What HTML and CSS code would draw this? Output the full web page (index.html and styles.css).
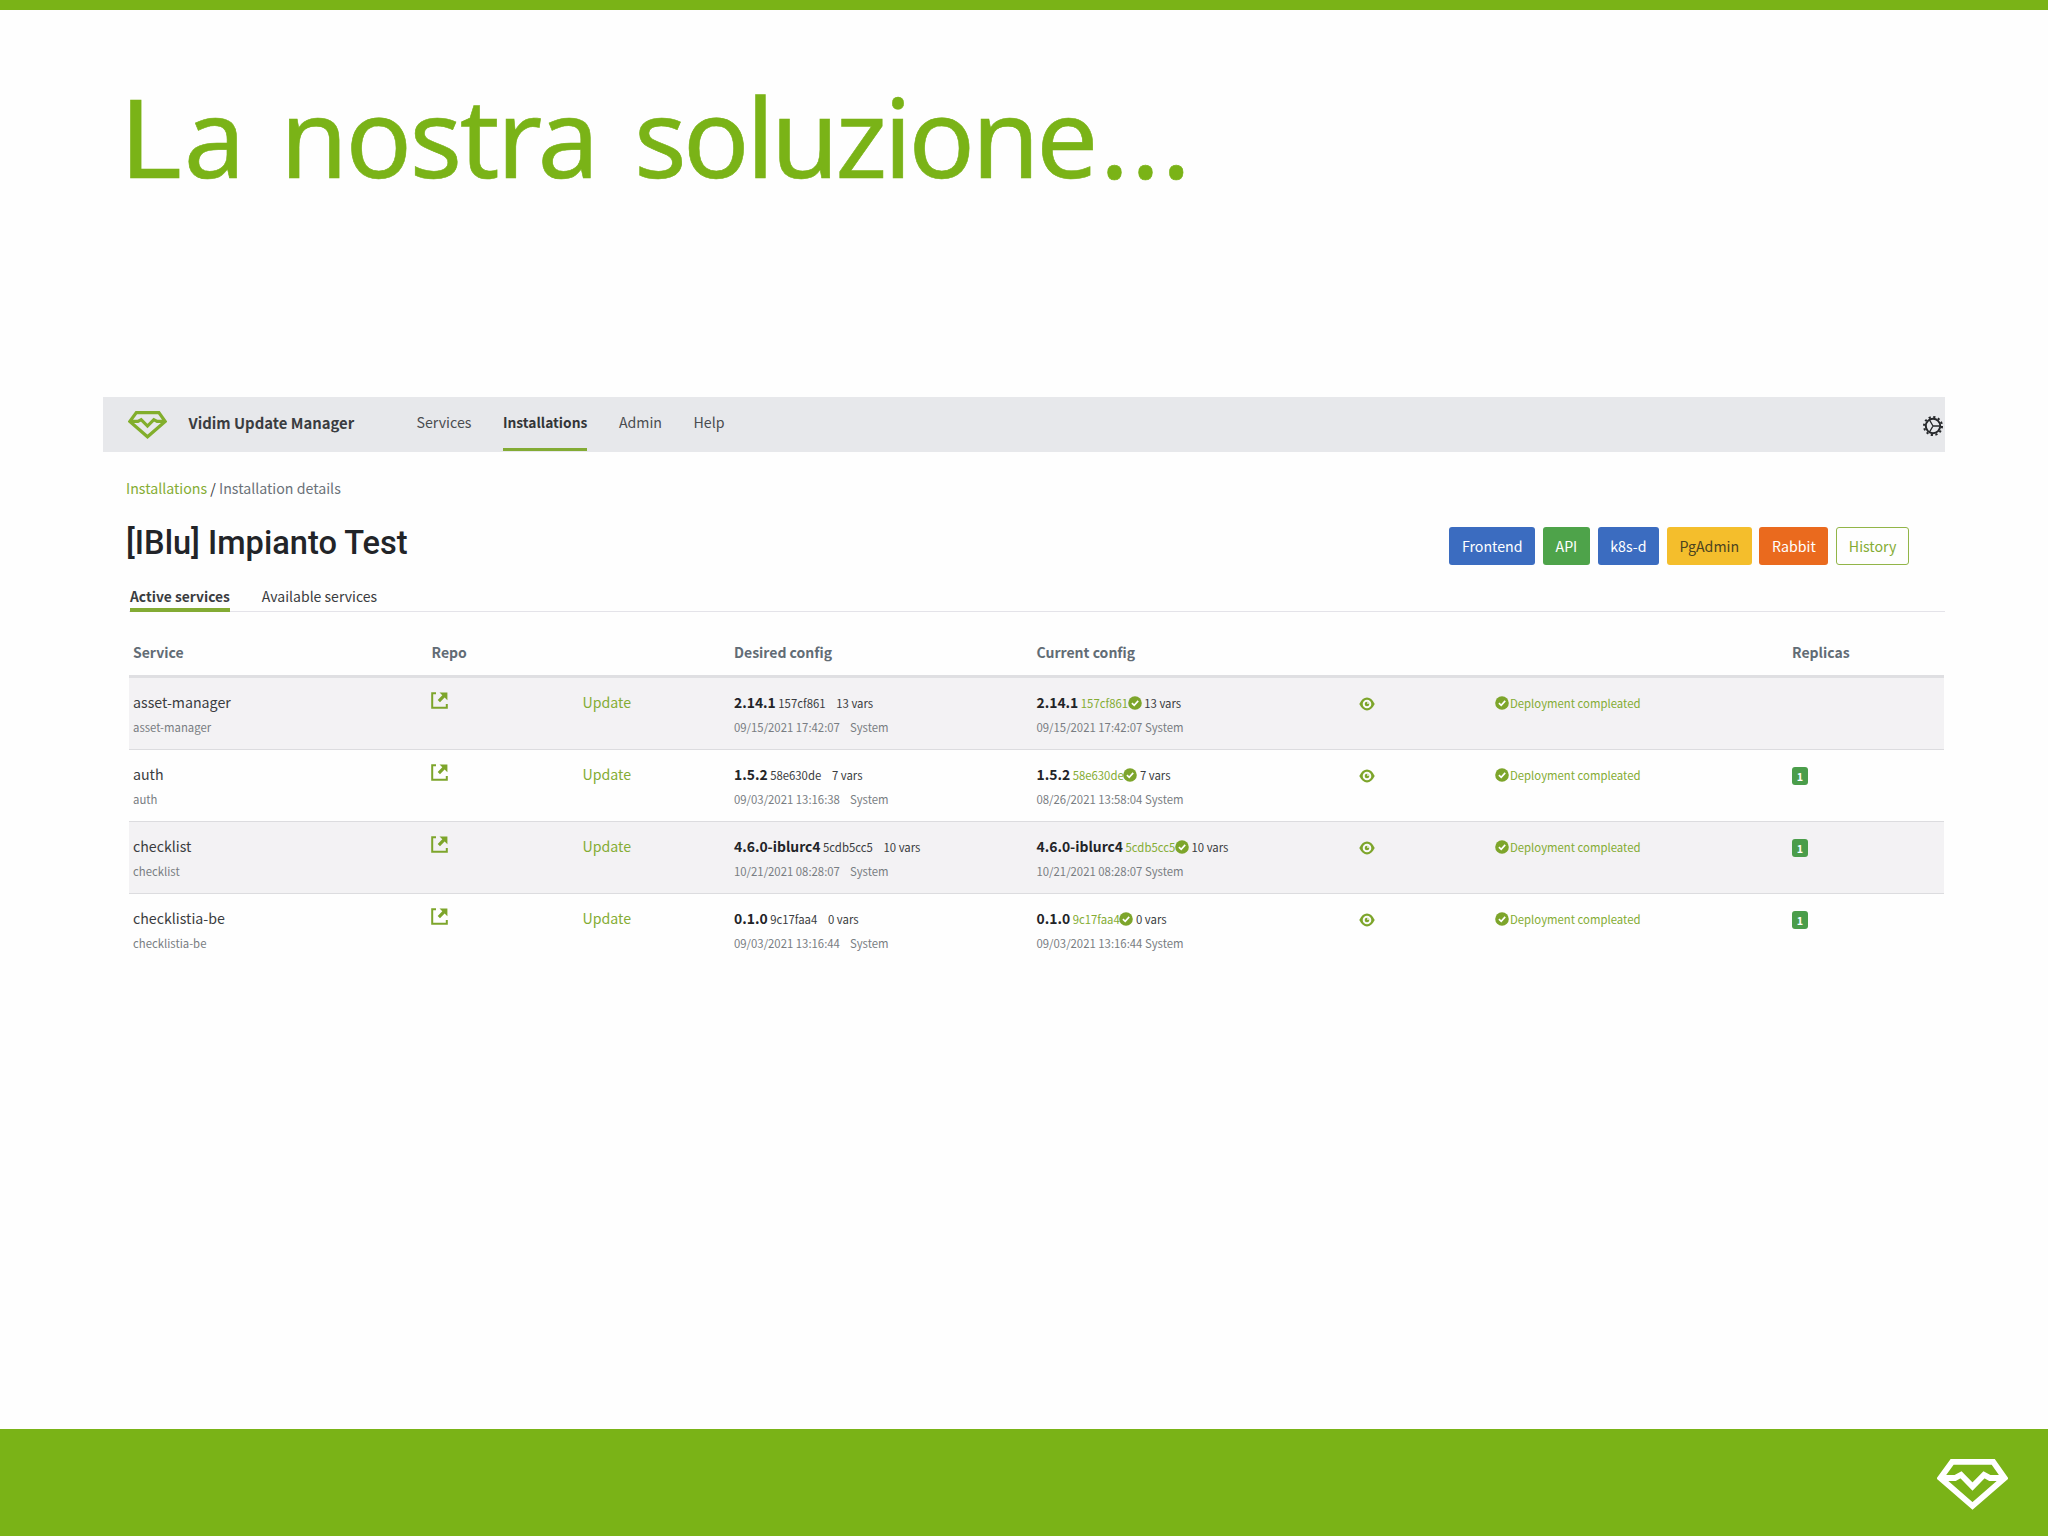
FILE: index.html
```html
<!DOCTYPE html>
<html lang="it">
<head>
    <meta charset="UTF-8">
    <meta name="viewport" content="width=device-width, initial-scale=1.0">
    <title>La nostra soluzione...</title>
    <link rel="stylesheet" href="styles.css">
</head>
<body>
    <!-- Icone condivise -->
    <svg class="sprite" width="0" height="0">
        <symbol id="gem" viewBox="0 0 71 51">
            <path d="M15.2 2.8H56.2L67.6 19L35.5 47L3.4 19Z M3.4 19H18L24 15.8L35.5 27.5L47 15.8L53 19H67.6" fill="none" stroke="currentColor" stroke-width="5.8"/>
        </symbol>
        <symbol id="link" viewBox="0 0 17 17">
            <path d="M5 1.2H1.2V15.8H15.8V12" fill="none" stroke="currentColor" stroke-width="2"/>
            <path d="M8.5 0.4H16.4V8.3L13.6 5.6L9 10.2L6.7 7.9L11.3 3.3Z" fill="currentColor"/>
        </symbol>
        <symbol id="eye" viewBox="0 0 16 14">
            <path d="M0.3 7Q3.5 0.6 8 0.6T15.7 7Q12.5 13.4 8 13.4T0.3 7Z" fill="currentColor"/>
            <circle cx="8" cy="7" r="4.3" fill="#fafafa"/>
            <circle cx="8" cy="7" r="2.3" fill="currentColor"/>
            <circle cx="9" cy="6" r="0.9" fill="#fafafa"/>
        </symbol>
        <symbol id="check" viewBox="0 0 14 14">
            <circle cx="7" cy="7" r="6.8" fill="currentColor"/>
            <path d="M3.9 7.2L6.2 9.3L10.2 4.9" fill="none" stroke="#fff" stroke-width="1.7"/>
        </symbol>
    </svg>

    <div class="slide">
        <h1 class="slide-title"><span class="cap">L</span>a nostra <span class="tight">soluzion</span><span class="dots">e...</span></h1>

        <div class="app">
            <div class="navbar">
                <svg class="logo"><use href="#gem"/></svg>
                <span class="brand">Vidim Update Manager</span>
                <nav class="menu">
                    <a>Services</a>
                    <a class="active">Installations</a>
                    <a>Admin</a>
                    <a>Help</a>
                </nav>
                <svg class="gear" viewBox="0 0 20 20">
                    <circle cx="10" cy="10" r="9" fill="none" stroke="currentColor" stroke-width="2" stroke-dasharray="2.2 2.51"/>
                    <circle cx="10" cy="10" r="7.2" fill="none" stroke="currentColor" stroke-width="2"/>
                    <path d="M10 10H16.5M10 10L6.6 4.2M10 10L6.6 15.8" stroke="currentColor" stroke-width="1.3"/>
                </svg>
            </div>

            <div class="page">
                <div class="breadcrumb"><a>Installations</a> <b>/</b> Installation details</div>

                <div class="heading">
                    <h2>[IBlu] Impianto Test</h2>
                    <div class="buttons">
                        <a class="btn blue">Frontend</a>
                        <a class="btn green">API</a>
                        <a class="btn blue">k8s-d</a>
                        <a class="btn yellow">PgAdmin</a>
                        <a class="btn orange">Rabbit</a>
                        <a class="btn outline">History</a>
                    </div>
                </div>

                <div class="tabs">
                    <a class="active">Active services</a>
                    <a>Available services</a>
                </div>

                <div class="table">
                    <div class="row head">
                        <div>Service</div>
                        <div>Repo</div>
                        <div></div>
                        <div>Desired config</div>
                        <div>Current config</div>
                        <div></div>
                        <div></div>
                        <div>Replicas</div>
                    </div>
                    <div class="row">
                        <div class="name">asset-manager<p class="sub">asset-manager</p></div>
                        <div><svg class="i-link"><use href="#link"/></svg></div>
                        <div><a>Update</a></div>
                        <div class="desired"><b>2.14.1</b> <small>157cf861</small> <small class="sp">13 vars</small><p class="sub">09/15/2021 17:42:07 <span class="sp">System</span></p></div>
                        <div><b>2.14.1</b> <small class="ok">157cf861</small><svg class="i-check"><use href="#check"/></svg> <small>13 vars</small><p class="sub">09/15/2021 17:42:07 System</p></div>
                        <div><svg class="i-eye"><use href="#eye"/></svg></div>
                        <div><svg class="i-check"><use href="#check"/></svg><small class="ok status">Deployment compleated</small></div>
                        <div></div>
                    </div>
                    <div class="row">
                        <div class="name">auth<p class="sub">auth</p></div>
                        <div><svg class="i-link"><use href="#link"/></svg></div>
                        <div><a>Update</a></div>
                        <div class="desired"><b>1.5.2</b> <small>58e630de</small> <small class="sp">7 vars</small><p class="sub">09/03/2021 13:16:38 <span class="sp">System</span></p></div>
                        <div><b>1.5.2</b> <small class="ok">58e630de</small><svg class="i-check"><use href="#check"/></svg> <small>7 vars</small><p class="sub">08/26/2021 13:58:04 System</p></div>
                        <div><svg class="i-eye"><use href="#eye"/></svg></div>
                        <div><svg class="i-check"><use href="#check"/></svg><small class="ok status">Deployment compleated</small></div>
                        <div><span class="badge">1</span></div>
                    </div>
                    <div class="row">
                        <div class="name">checklist<p class="sub">checklist</p></div>
                        <div><svg class="i-link"><use href="#link"/></svg></div>
                        <div><a>Update</a></div>
                        <div class="desired"><b>4.6.0-iblurc4</b> <small>5cdb5cc5</small> <small class="sp">10 vars</small><p class="sub">10/21/2021 08:28:07 <span class="sp">System</span></p></div>
                        <div><b>4.6.0-iblurc4</b> <small class="ok">5cdb5cc5</small><svg class="i-check"><use href="#check"/></svg> <small>10 vars</small><p class="sub">10/21/2021 08:28:07 System</p></div>
                        <div><svg class="i-eye"><use href="#eye"/></svg></div>
                        <div><svg class="i-check"><use href="#check"/></svg><small class="ok status">Deployment compleated</small></div>
                        <div><span class="badge">1</span></div>
                    </div>
                    <div class="row">
                        <div class="name">checklistia-be<p class="sub">checklistia-be</p></div>
                        <div><svg class="i-link"><use href="#link"/></svg></div>
                        <div><a>Update</a></div>
                        <div class="desired"><b>0.1.0</b> <small>9c17faa4</small> <small class="sp">0 vars</small><p class="sub">09/03/2021 13:16:44 <span class="sp">System</span></p></div>
                        <div><b>0.1.0</b> <small class="ok">9c17faa4</small><svg class="i-check"><use href="#check"/></svg> <small>0 vars</small><p class="sub">09/03/2021 13:16:44 System</p></div>
                        <div><svg class="i-eye"><use href="#eye"/></svg></div>
                        <div><svg class="i-check"><use href="#check"/></svg><small class="ok status">Deployment compleated</small></div>
                        <div><span class="badge">1</span></div>
                    </div>
                </div>
            </div>
        </div>

        <div class="footer">
            <svg class="footer-logo"><use href="#gem"/></svg>
        </div>
    </div>
</body>
</html>
```
FILE: styles.css
```css
* {
    box-sizing: border-box;
}
body {
    margin: 0;
    background-color: #fefefe;
    color: #3a3c40;
    font-family: "Noto Sans CJK SC", "Noto Sans", sans-serif;
    font-size: 14.2px;
    line-height: 20px;
}
.sprite {
    display: none;
}
.slide {
    display: flex;
    flex-direction: column;
    height: 1536px;
    border-top: 10px solid #7ab317; /* Barra verde in alto */
}
.slide-title {
    margin: 65px 0 0 120px;
    height: 120px;
    color: #7ab317;
    font-family: "Noto Sans", sans-serif;
    font-size: 110px;
    font-weight: 400;
    line-height: 120px;
    letter-spacing: -2.5px;
    word-spacing: 11px;
    white-space: nowrap;
    -webkit-text-stroke: 0.6px #7ab317;
}
.slide-title .cap {
    font-family: "DejaVu Sans", sans-serif;
    font-size: 107px;
    letter-spacing: 4px;
}
.slide-title .tight {
    letter-spacing: -3.5px;
}
.slide-title .dots {
    letter-spacing: 1.5px;
}

/* Applicazione */
.app {
    width: 1842px;
    margin: 202px 0 0 103px;
}
.navbar {
    display: flex;
    height: 55px;
    background-color: #e7e8eb;
    line-height: 51px;
}
.logo {
    width: 39px;
    height: 28px;
    margin: 14px 22px 0 24.5px;
    color: #82ae2c;
}
.brand {
    width: 228px;
    font-size: 14.87px;
    font-weight: 700;
}
.menu {
    display: flex;
    gap: 31.5px;
    flex: 1;
    color: #4a4c50;
}
.menu .active {
    height: 54px;
    border-bottom: 3px solid #83ab34;
    color: #333538;
    font-size: 13.8px;
    font-weight: 700;
}
.gear {
    width: 20px;
    height: 22px;
    margin: 18px 2px 0 0;
    color: #26282b;
}
.page {
    padding: 26px 0 0 23px;
}
.breadcrumb {
    color: #6a7178;
}
.breadcrumb b {
    color: #333538;
    font-weight: 400;
}
a {
    color: inherit;
}
.breadcrumb a, .row a {
    color: #84ac33;
}
.heading {
    display: flex;
    justify-content: space-between;
    align-items: flex-end;
    height: 42px;
    margin-top: 25px;
    padding-right: 36px;
}
.heading h2 {
    align-self: flex-start;
    margin: 0;
    color: #222428;
    font-family: Roboto, sans-serif;
    font-size: 32.6px;
    font-weight: 500;
    line-height: 40px;
}
.buttons {
    display: flex;
    gap: 7.8px;
}
.btn {
    height: 38px;
    padding: 0 12.6px;
    border-radius: 3px;
    color: #fff;
    line-height: 38px;
}
.blue {
    background-color: #3b6cc0;
}
.green {
    background-color: #4ea34a;
}
.yellow {
    background-color: #f4be2c;
    color: #4c431f;
}
.orange {
    background-color: #ea6a1e;
}
.outline {
    padding: 0 11.6px;
    border: 1px solid #92b548;
    color: #84ac33;
    line-height: 36px;
}
.tabs {
    display: flex;
    gap: 32px;
    height: 26px;
    margin: 21px 0 0 3px;
    padding-left: 1px;
    border-bottom: 1px solid #e4e3e9;
    font-size: 14.06px;
}
.tabs .active {
    height: 26px;
    border-bottom: 4px solid #83ab34;
    font-size: 13.8px;
    font-weight: 700;
}

/* Tabella dei servizi */
.table {
    margin: 0 1px 0 3px;
}
.row {
    display: grid;
    grid-template-columns: 298.5px 151px 151.5px 302.5px 322.5px 136px 297px 1fr;
    height: 72px;
    padding: 11px 0 0 4px;
    border-bottom: 1px solid #dcdcdf;
    line-height: 26px;
}
.row:nth-child(even) {
    background-color: #f3f2f4;
}
.row:last-child {
    border-bottom: none;
}
.row.head {
    height: 66px;
    padding-top: 30px;
    border-bottom: 3px solid #dfdfe2;
    color: #626c75;
    font-size: 14px;
    font-weight: 700;
    line-height: 20px;
}
.row b {
    margin-right: -0.7px;
    color: #222428;
    font-size: 13.9px;
}
small, .sub {
    font-size: 11.35px;
}
.sub {
    margin: 0;
    color: #797d82;
    line-height: 23px;
}
.name .sub {
    margin-top: 1px;
}
.desired .sp {
    margin-left: 7.5px;
}
.ok {
    color: #84ac33;
}
.status {
    margin-left: 2px;
}
.row svg {
    color: #7da52b;
}
.i-link {
    display: block;
    width: 17px;
    height: 17px;
    margin: 3px 0 0 -1px;
}
.i-check {
    width: 14px;
    height: 14px;
    margin: 0 -0.5px 0 -0.5px;
    vertical-align: -1.5px;
}
.i-eye {
    display: block;
    width: 16px;
    height: 14px;
    margin-top: 8px;
}
.badge {
    display: block;
    width: 16px;
    height: 18px;
    margin-top: 6px;
    border-radius: 3px;
    background-color: #4a9d4a;
    color: #fff;
    font-size: 10.8px;
    font-weight: 700;
    line-height: 18px;
    text-align: center;
}

.footer {
    display: flex;
    justify-content: flex-end;
    height: 107px;
    margin-top: auto;
    padding: 30px 40px 0 0;
    background-color: #7ab317;
}
.footer-logo {
    width: 71px;
    height: 51px;
    color: #fff;
}
```
